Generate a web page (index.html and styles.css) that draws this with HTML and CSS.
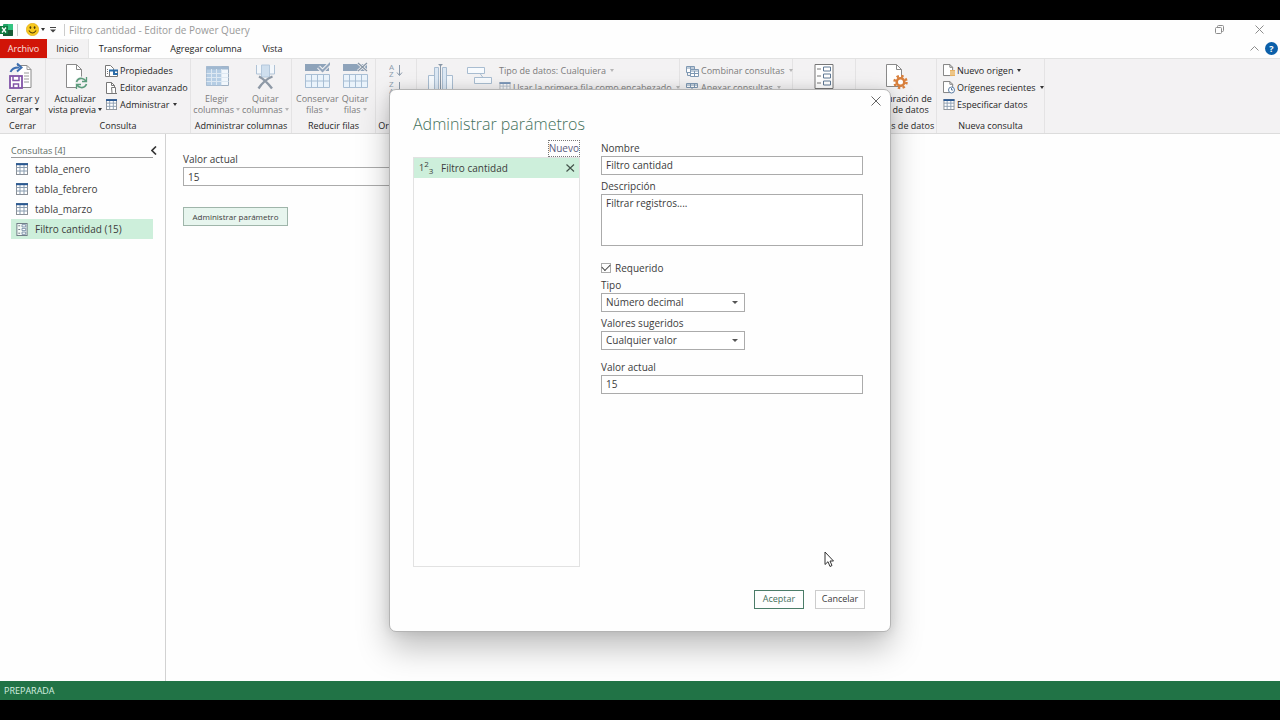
FILE: index.html
```html
<!DOCTYPE html>
<html lang="es">
<head>
<meta charset="UTF-8" />
<meta name="viewport" content="width=device-width, initial-scale=1" />
<title>Filtro cantidad - Editor de Power Query</title>
<link rel="stylesheet" href="styles.css">
</head>
<body>
<!-- shared icons -->
<svg class="defs" aria-hidden="true">
  <symbol id="i-table" viewBox="0 0 12 12">
    <rect x=".5" y=".5" width="11" height="11" fill="#fff" stroke="#8a8f96"/>
    <path d="M.5 4.500h11M.5 8h11M4 2v9.500M8 2v9.500" stroke="#8a9db0" fill="none"/>
    <path d="M0 1.200h12" stroke="#2b5a94" stroke-width="2"/>
  </symbol>
  <symbol id="i-param" viewBox="0 0 12 14">
    <rect x=".5" y=".5" width="11" height="13" fill="#f4fbf7" stroke="#6b7680"/>
    <path d="M2 3h2M2 7h2M2 11h2" stroke="#6b7680"/>
    <path d="M6 1.800h4v2.400H6zM6 5.800h4v2.400H6zM6 9.800h4v2.400H6z" fill="#fff" stroke="#5d7896" stroke-width=".8"/>
  </symbol>
  <symbol id="i-page" viewBox="0 0 12 14">
    <path d="M.5.5h7l3 3v9H.5z" fill="#fff" stroke="#777"/>
    <path d="M7.500.5v3h3" fill="none" stroke="#777"/>
  </symbol>
</svg>

<div class="app">
  <header class="titlebar">
    <svg class="xl" width="13" height="12" viewBox="0 0 13 12" aria-label="Excel">
      <rect x="3" width="10" height="12" rx="1" fill="#21a366"/>
      <path d="M8 0h4q1 0 1 1v5H8z" fill="#33c481"/>
      <path d="M3 6h10v5q0 1-1 1H3z" fill="#185c37"/>
      <rect y="2" width="8" height="8" fill="#107c41"/>
      <path d="M2 3.500l4 5M6 3.500l-4 5" stroke="#fff" stroke-width="1.300"/>
    </svg>
    <span class="bar"></span>
    <svg class="smile" width="13" height="13" viewBox="0 0 13 13">
      <circle cx="6.500" cy="6.500" r="6.200" fill="#f7c81e" stroke="#dfa614" stroke-width=".6"/>
      <ellipse cx="4.400" cy="4.600" rx=".9" ry="1.300" fill="#4d3a08"/>
      <ellipse cx="8.600" cy="4.600" rx=".9" ry="1.300" fill="#4d3a08"/>
      <path d="M2.800 7.500q3.700 5 7.400 0" fill="none" stroke="#4d3a08" stroke-width="1.100"/>
    </svg>
    <i class="caret"></i>
    <svg class="custom" width="6" height="6" viewBox="0 0 6 6"><path d="M0 .5h6" stroke="#444"/><path d="M0 2.500h6L3 5.500z" fill="#444"/></svg>
    <span class="bar"></span>
    <h1>Filtro cantidad - Editor de Power Query</h1>
    <div class="window-btns">
      <button aria-label="Restaurar"><svg width="9" height="9" viewBox="0 0 9 9" fill="none" stroke="#8c8c8c"><rect x=".5" y="2.500" width="6" height="6" rx="1"/><path d="M2.500 2V1.500q0-1 1-1h4q1 0 1 1v4q0 1-1 1H7"/></svg></button>
      <button aria-label="Cerrar ventana"><svg width="9" height="9" viewBox="0 0 9 9" stroke="#8c8c8c"><path d="M.5.5l8 8M8.500.5l-8 8"/></svg></button>
    </div>
  </header>

  <nav class="tabs">
    <button class="tab file">Archivo</button>
    <button class="tab active">Inicio</button>
    <button class="tab transform">Transformar</button>
    <button class="tab add">Agregar columna</button>
    <button class="tab view">Vista</button>
    <div class="help">
      <svg width="9" height="5" viewBox="0 0 9 5" fill="none" stroke="#8c8c8c"><path d="M.5 4.500l4-4 4 4"/></svg>
      <button class="help-btn" aria-label="Ayuda">?</button>
    </div>
  </nav>

  <section class="ribbon">
    <div class="group g-close">
      <div class="tools">
        <button class="big">
          <svg width="26" height="28" viewBox="0 0 26 28" fill="none">
            <path d="M8 3.500h10l4 4v18H13" fill="#fff" stroke="#8a8a8a"/>
            <path d="M18 3.500v4h4M15 11h5M15 14h5M15 17h5M15 20h5" stroke="#9a9a9a"/>
            <path d="M1.500 10q2-5 9-4.500" stroke="#3b6eb0" stroke-width="2"/>
            <path d="M8 1.500l4.500 4L8 9.500" stroke="#3b6eb0" stroke-width="2"/>
            <rect x="1" y="14" width="12" height="12" fill="#fff" stroke="#8254a8" stroke-width="1.800"/>
            <path d="M4 14v4.500h6V14M4.500 26v-4h5v4" stroke="#8254a8" stroke-width="1.500"/>
          </svg>
          <span>Cerrar y<br>cargar<i class="caret"></i></span>
        </button>
      </div>
      <h2>Cerrar</h2>
    </div>

    <div class="group g-query">
      <div class="tools">
        <button class="big">
          <svg width="26" height="28" viewBox="0 0 26 28" fill="none">
            <path d="M4.500 2.500h10l5 5v18h-15z" fill="#fff" stroke="#8a8a8a"/>
            <path d="M14.500 2.500v5h5" stroke="#8a8a8a"/>
            <circle cx="19.500" cy="21" r="6.500" fill="#f3f2f3"/>
            <path d="M14.500 20q1.500-4 5.500-3.500 2.500.3 4 2.500M24.500 22q-1.500 4-5.500 3.500-2.500-.3-4-2.500" stroke="#5b9c7c" stroke-width="1.700"/>
            <path d="M24.500 15v4.500H20M14.500 27v-4.500H19" stroke="#5b9c7c" stroke-width="1.300"/>
          </svg>
          <span>Actualizar<br>vista previa<i class="caret"></i></span>
        </button>
        <div class="stack">
          <button class="small"><svg width="13" height="12" viewBox="0 0 13 12"><path d="M.5.500h5l3 3v8h-8z" fill="#fff" stroke="#777"/><path d="M2 4.500h1M2 6.500h1M2 8.500h1" stroke="#777"/><path d="M4.500 5.500h8v6h-8z" fill="#fff" stroke="#777"/><path d="M4 5.500h9M9 6v3h4" stroke="#2b6ca8" stroke-width="2" fill="none"/></svg>Propiedades</button>
          <button class="small"><svg width="13" height="12" viewBox="0 0 13 12"><path d="M1.500.500h5l3 3v8h-8z" fill="#fff" stroke="#777"/><path d="M6.500.5v3h3" fill="none" stroke="#777"/><path d="M6.500 5.500h4v5q0 1 1.500 1H6q1 0 1-1z" fill="#fff" stroke="#777"/></svg>Editor avanzado</button>
          <button class="small"><svg width="13" height="11"><use href="#i-table"/></svg>Administrar<i class="caret"></i></button>
        </div>
      </div>
      <h2>Consulta</h2>
    </div>

    <div class="group g-cols">
      <div class="tools off">
        <button class="big">
          <svg width="26" height="28" viewBox="0 0 26 28" fill="none">
            <path d="M2.500 4.500h22v19h-22z" fill="#f2f7fc" stroke="#9fb0c2"/>
            <path d="M2.500 4.500h15v19h-15z" fill="#b5cde4"/>
            <path d="M2.500 4.500h22v3h-22z" fill="#a0b8d0"/>
            <path d="M2.500 11.500h22M2.500 15.500h22M2.500 19.500h22M7.500 7v16M12.500 7v16M17.500 7v16" stroke="#dde8f2"/>
          </svg>
          <span>Elegir<br>columnas<i class="caret"></i></span>
        </button>
        <button class="big">
          <svg width="26" height="28" viewBox="0 0 26 28" fill="none">
            <path d="M4.500 3v9h5V3M17.500 3v9h5V3" stroke="#b0c3d6" fill="#f3f7fb"/>
            <path d="M9.500 3h8v12h-8z" fill="#cfdfee" stroke="#b4c8dc"/>
            <path d="M7 14.500q6 3 13 12M20.500 14.500q-8 3-14 12" stroke="#8e99a6" stroke-width="2.400"/>
          </svg>
          <span>Quitar<br>columnas<i class="caret"></i></span>
        </button>
      </div>
      <h2>Administrar columnas</h2>
    </div>

    <div class="group g-rows">
      <div class="tools off">
        <button class="big">
          <svg width="26" height="28" viewBox="0 0 26 28" fill="none">
            <path d="M1 2h24v7H1z" fill="#8ea3ba"/>
            <path d="M1.500 12.500h24v13h-24zM1.500 19h24M7.500 12v13M13.500 12v13M19.500 12v13" fill="#eaf3fb" stroke="#a8bed4"/>
            <path d="M14.500 5l4 4 8-8" stroke="#f3f2f3" stroke-width="4"/><path d="M14.500 5l4 4 8-8" stroke="#93a6bd" stroke-width="2"/>
          </svg>
          <span>Conservar<br>filas<i class="caret"></i></span>
        </button>
        <button class="big">
          <svg width="26" height="28" viewBox="0 0 26 28" fill="none">
            <path d="M1 2h24v7H1z" fill="#8ea3ba"/>
            <path d="M1.500 12.500h24v13h-24zM1.500 19h24M7.500 12v13M13.500 12v13M19.500 12v13" fill="#eaf3fb" stroke="#a8bed4"/>
            <path d="M16 1l9 8M25 1l-9 8" stroke="#f3f2f3" stroke-width="3"/><path d="M16 1l9 8M25 1l-9 8" stroke="#8796a6" stroke-width="1.300"/>
          </svg>
          <span>Quitar<br>filas<i class="caret"></i></span>
        </button>
      </div>
      <h2>Reducir filas</h2>
    </div>

    <div class="group g-sort">
      <div class="tools off">
        <div class="stack">
          <button class="small" aria-label="Orden ascendente"><svg width="14" height="15" viewBox="0 0 14 15"><text x="0" y="7">A</text><text x="0" y="14">Z</text><path d="M10.500 2v10M8 9.500l2.500 3 2.500-3" fill="none" stroke="#8c9bac"/></svg></button>
          <button class="small" aria-label="Orden descendente"><svg width="14" height="15" viewBox="0 0 14 15"><text x="0" y="7">Z</text><text x="0" y="14">A</text><path d="M10.500 2v10M8 9.500l2.500 3 2.500-3" fill="none" stroke="#8c9bac"/></svg></button>
        </div>
      </div>
      <h2>Ordenar</h2>
    </div>

    <div class="group g-transform">
      <div class="tools off">
        <button class="big split" aria-label="Dividir columna">
          <svg width="26" height="28" viewBox="0 0 26 28" fill="none" stroke="#a9bdd1">
            <path d="M.5 13.500h6v14h-6zM18.500 13.500h6v14h-6z" fill="#f5f9fd"/>
            <path d="M6.500 5.500h4v22h-4zM14.500 5.500h4v22h-4z" fill="#dce8f4"/>
            <path d="M12.500 4v24" stroke="#8796a6"/><path d="M10 2h5l-2.500 2.500z" fill="#8796a6" stroke="none"/>
          </svg>
        </button>
        <button class="big" aria-label="Agrupar por">
          <svg width="26" height="28" viewBox="0 0 26 28" fill="#f8fbfe" stroke="#a9bdd1">
            <path d="M.5 5.500h17v6H.500zM7.500 15.500h17v6h-17zM13 11.500l3 4" />
          </svg>
        </button>
        <div class="stack">
          <button class="small">Tipo de datos: Cualquiera<i class="caret"></i></button>
          <button class="small"><svg width="12" height="11"><use href="#i-table"/></svg>Usar la primera fila como encabezado<i class="caret"></i></button>
        </div>
      </div>
    </div>

    <div class="group g-combine">
      <div class="tools off">
        <div class="stack">
          <button class="small"><svg width="13" height="12" viewBox="0 0 13 12" fill="#fff" stroke="#7f98b3"><path d="M.5 1.500h8v6h-8zM.5 3h8M4.500 1v6"/><path d="M4.500 4.500h8v7h-8zM4.500 6h8M4.500 8.500h8M8.500 6v5.500"/><path d="M1.500 8v2.500h3" fill="none"/></svg>Combinar consultas<i class="caret"></i></button>
          <button class="small"><svg width="13" height="12" viewBox="0 0 13 12" fill="#fff" stroke="#7f98b3"><path d="M.5 1.500h11v4H.500zM.5 3h11M4.500 1v4M8.500 1v4M6 6v3M3.500 8.500h5v3h-5z"/></svg>Anexar consultas<i class="caret"></i></button>
        </div>
      </div>
    </div>

    <div class="group g-params">
      <div class="tools">
        <button class="big" aria-label="Administrar parámetros">
          <svg width="20" height="28" viewBox="0 0 20 28" fill="#fff" stroke="#777">
            <path d="M1 2.500h18v24H1z"/>
            <path d="M9.500 5h7v4h-7zM9.500 12h7v4h-7zM9.500 19h7v4h-7z" stroke="#5f7894"/><path d="M3 7h4M3 14h4M3 21h4"/>
          </svg>
        </button>
      </div>
    </div>

    <div class="group g-sources">
      <div class="tools">
        <button class="big">
          <svg width="26" height="28" viewBox="0 0 26 28" fill="none">
            <path d="M3.500 2.500h10l5 5v17h-15z" fill="#fff" stroke="#8a8a8a"/>
            <path d="M13.500 2.500v5h5" stroke="#8a8a8a"/>
            <circle cx="17.500" cy="20" r="6" stroke="#d9803d" stroke-width="2.500" stroke-dasharray="2.400 2.312"/>
            <circle cx="17.500" cy="20" r="3.800" fill="#fff" stroke="#d9803d" stroke-width="2.600"/>
          </svg>
          <span>Configuración de<br>origen de datos</span>
        </button>
      </div>
      <h2>Orígenes de datos</h2>
    </div>

    <div class="group g-new">
      <div class="tools">
        <div class="stack">
          <button class="small"><svg width="12" height="13" viewBox="0 0 12 13"><use href="#i-page" width="11" height="13"/><path d="M7 6h5v6H7z" fill="#e5b062"/><path d="M7 8h5M7 10h5" stroke="#f6dcae"/></svg>Nuevo origen<i class="caret"></i></button>
          <button class="small"><svg width="12" height="13" viewBox="0 0 12 13"><use href="#i-page" width="11" height="13"/><circle cx="8.500" cy="9" r="3" fill="#fff" stroke="#5d7fa6"/><path d="M8.500 7v2h1.500" stroke="#5d7fa6" fill="none"/></svg>Orígenes recientes<i class="caret"></i></button>
          <button class="small"><svg width="12" height="11"><use href="#i-table"/></svg>Especificar datos</button>
        </div>
      </div>
      <h2>Nueva consulta</h2>
    </div>
  </section>

  <main class="workspace">
    <aside class="queries">
      <div class="queries-head">
        <h2>Consultas [4]</h2>
        <button aria-label="Contraer"><svg width="6" height="9" viewBox="0 0 6 9" fill="none" stroke="#333" stroke-width="1.600"><path d="M5 .5l-4 4 4 4"/></svg></button>
      </div>
      <ul>
        <li><svg width="12" height="12"><use href="#i-table"/></svg>tabla_enero</li>
        <li><svg width="12" height="12"><use href="#i-table"/></svg>tabla_febrero</li>
        <li><svg width="12" height="12"><use href="#i-table"/></svg>tabla_marzo</li>
        <li class="selected"><svg width="12" height="13"><use href="#i-param"/></svg>Filtro cantidad (15)</li>
      </ul>
    </aside>
    <section class="preview">
      <label for="current">Valor actual</label>
      <input id="current" type="text" value="15">
      <button class="manage">Administrar parámetro</button>
    </section>
  </main>

  <footer class="status">PREPARADA</footer>
</div>

<div class="overlay">
  <dialog open class="params" aria-labelledby="params-title">
    <button class="close" aria-label="Cerrar"><svg width="10" height="10" viewBox="0 0 10 10" stroke="#666"><path d="M.5.5l9 9M9.500.5l-9 9"/></svg></button>
    <h2 id="params-title">Administrar parámetros</h2>
    <div class="columns">
      <div class="list-col">
        <a class="new" href="#">Nuevo</a>
        <div class="list">
          <div class="item">
            <span class="num">1<sup>2</sup><sub>3</sub></span>
            <span>Filtro cantidad</span>
            <button aria-label="Eliminar"><svg width="9" height="8" viewBox="0 0 9 8" stroke="#45544c" stroke-width="1.200"><path d="M.5.5l7.500 7M8 .5l-7.500 7"/></svg></button>
          </div>
        </div>
      </div>
      <form class="fields">
        <label for="name">Nombre</label>
        <input id="name" type="text" value="Filtro cantidad">
        <label for="desc">Descripción</label>
        <textarea id="desc">Filtrar registros....</textarea>
        <label class="check"><input type="checkbox" checked>Requerido</label>
        <label for="type">Tipo</label>
        <div class="select"><select id="type"><option>Número decimal</option></select></div>
        <label for="suggested">Valores sugeridos</label>
        <div class="select"><select id="suggested"><option>Cualquier valor</option></select></div>
        <label for="value" class="last">Valor actual</label>
        <input id="value" type="text" value="15">
      </form>
    </div>
    <div class="actions">
      <button class="ok">Aceptar</button>
      <button>Cancelar</button>
    </div>
    <svg class="pointer" width="10" height="17" viewBox="0 0 10 17"><path d="M1 1v12.500l3-2.800 2 4.800 2-1-2-4.500h3.500z" fill="#fff" stroke="#333"/></svg>
  </dialog>
</div>
</body>
</html>
```
FILE: styles.css
```css
* {
  margin: 0;
  padding: 0;
  box-sizing: border-box;
}

body {
  background: #000;
  color: #3c3c3c;
  font-family: "Open Sans", "Noto Sans", sans-serif;
  font-size: 10px;
  line-height: 16px;
}

button, input, select, textarea {
  font: inherit;
  color: inherit;
}

button {
  background: none;
  border: 0;
}

h1, h2 {
  font-size: inherit;
  font-weight: normal;
}

svg {
  flex: none;
}

.defs {
  position: absolute;
  width: 0;
  height: 0;
}

.app {
  height: 100vh;
  border: solid #000;
  border-width: 20px 0;
  background: #fefefe;
  display: flex;
  flex-direction: column;
  overflow: hidden;
}

.caret {
  display: inline-block;
  border: 2px solid transparent;
  border-top: 3px solid #333;
  border-bottom: 0;
  margin-left: 2px;
  vertical-align: 2px;
}

/* title bar */
.titlebar {
  height: 19px;
  flex: none;
  display: flex;
  align-items: center;
}

.titlebar .bar {
  width: 1px;
  height: 12px;
  background: #ccc;
  margin: 0 4px;
}

.titlebar .smile {
  margin-left: 4px;
}

.titlebar .custom {
  margin: 0 4px 0 5px;
}

.titlebar h1 {
  color: #999;
}

.window-btns {
  margin-left: auto;
  display: flex;
}

.window-btns button {
  width: 40px;
  display: grid;
  place-items: center;
}

.window-btns button:last-child {
  margin-right: 1px;
}

/* tabs */
.tabs {
  height: 19px;
  flex: none;
  display: flex;
  font-size: 9px;
}

.tab {
  color: #222;
}

.tab.file {
  width: 47px;
  background: #d11507;
  color: #fbe3e0;
}

.tab.active {
  width: 42px;
  background: #f3f2f3;
  border-right: 1px solid #e4e4e4;
}

.tab.transform {
  width: 72px;
}

.tab.add {
  width: 90px;
}

.tab.view {
  width: 43px;
}

.help {
  margin-left: auto;
  display: flex;
  align-items: center;
  gap: 6px;
  padding-right: 2px;
}

.help-btn {
  width: 13px;
  height: 13px;
  border-radius: 50%;
  background: #0b5fa9;
  color: #fff;
  font-weight: bold;
  line-height: 13px;
}

/* ribbon */
.ribbon {
  flex: none;
  height: 76px;
  background: #f3f2f3;
  border-top: 1px solid #e2e2e2;
  border-bottom: 1px solid #dcdcdc;
  display: flex;
  font-size: 9px;
  line-height: 11px;
  white-space: nowrap;
  color: #262626;
}

.group {
  flex: none;
  border-right: 1px solid #e4e3e4;
  display: flex;
  flex-direction: column;
  justify-content: space-between;
  padding-bottom: 2px;
}

.group h2 {
  text-align: center;
}

.tools {
  display: flex;
  justify-content: center;
  padding-top: 3px;
}

.tools.off {
  color: #7c7c7c;
}

.off .caret {
  border-top-color: #b5b5b5;
}

.off .small use {
  opacity: 0.6;
}

.off svg text {
  font-size: 8px;
  fill: #8c9bac;
}

.big {
  display: flex;
  flex-direction: column;
  align-items: center;
  gap: 3px;
}

.small {
  height: 17px;
  display: flex;
  align-items: center;
  gap: 2px;
}

.g-close { width: 46px; }
.g-query { width: 145px; }
.g-cols { width: 101px; }
.g-rows { width: 84px; }
.g-sort { width: 41px; }
.g-transform { width: 263px; }
.g-combine { width: 113px; }
.g-params { width: 63px; }
.g-sources { width: 81px; }
.g-new { width: 108px; }

.g-query .tools {
  gap: 3px;
}

.g-cols .tools {
  gap: 2px;
}

.g-rows .tools {
  justify-content: flex-start;
  gap: 3px;
  padding-left: 4px;
}

.g-transform .tools {
  justify-content: flex-start;
  gap: 6px;
  padding-left: 11px;
}

.split {
  padding-right: 7px;
}

.g-combine .tools,
.g-new .tools {
  justify-content: flex-start;
  padding-left: 6px;
}

/* workspace */
.workspace {
  flex: 1;
  display: flex;
}

.queries {
  width: 166px;
  border-right: 1px solid #d2d2d2;
  padding: 9px 12px 0 11px;
}

.queries-head {
  height: 15px;
  border-bottom: 1px solid #9a9a9a;
  display: flex;
  justify-content: space-between;
  color: #5c6b63;
}

.queries-head h2 {
  font-size: 9px;
}

.queries-head button {
  height: 12px;
  margin-right: -4px;
}

.queries ul {
  list-style: none;
  padding-top: 1px;
}

.queries li {
  height: 20px;
  display: flex;
  align-items: center;
  gap: 7px;
  padding-left: 5px;
}

.queries li.selected {
  background: #cdefdb;
}

.preview {
  flex: 1;
  padding: 17px;
  display: flex;
  flex-direction: column;
  align-items: flex-start;
}

input[type="text"], textarea, select {
  width: 100%;
  height: 19px;
  background: #fff;
  border: 1px solid #ababab;
  padding: 0 4px;
  display: block;
}

.preview input {
  max-width: 400px;
}

.manage {
  margin-top: 21px;
  height: 19px;
  width: 105px;
  border: 1px solid #9fb5aa;
  background: #e7f5ee;
  font-size: 8px;
}

.status {
  flex: none;
  height: 19px;
  background: #217346;
  color: #d6f0e0;
  font-size: 9px;
  line-height: 19px;
  padding-left: 4px;
}

/* dialog */
.overlay {
  position: absolute;
  inset: 0;
  display: grid;
  place-items: center;
}

.params {
  position: relative;
  width: 502px;
  max-width: 100%;
  color: inherit;
  background: #fefefe;
  border: 1px solid #b4b4b4;
  border-radius: 7px;
  box-shadow: 0 16px 32px rgba(0, 0, 0, 0.25), 0 0 12px rgba(0, 0, 0, 0.1);
  padding: 22px 27px 22px 23px;
}

.params h2 {
  font-size: 16px;
  font-weight: 300;
  line-height: 24px;
  color: #44705b;
}

.close {
  position: absolute;
  top: 6px;
  right: 9px;
  height: 10px;
  display: flex;
}

.columns {
  display: flex;
  gap: 21px;
  padding-top: 4px;
}

.list-col {
  width: 167px;
  display: flex;
  flex-direction: column;
  align-items: flex-end;
}

.new {
  border: 1px dotted #777;
  color: #5a5a7c;
  text-decoration: none;
  line-height: 15px;
}

.list {
  width: 100%;
  height: 410px;
  border: 1px solid #e2e2e2;
}

.item {
  height: 20px;
  background: #cdefdb;
  display: flex;
  align-items: center;
  padding: 0 4px 0 5px;
}

.item button {
  margin-left: auto;
  height: 8px;
  display: flex;
}

.num {
  width: 22px;
  font-size: 9px;
  line-height: 9px;
}

.num sup, .num sub {
  font-size: 8px;
  line-height: 0;
}

.fields {
  flex: 1;
}

.fields label {
  display: block;
}

.fields input + label,
.select + label {
  margin-top: 3px;
}

.fields textarea {
  height: 52px;
  resize: none;
}

.fields .check {
  display: flex;
  align-items: center;
  gap: 4px;
  margin: 14px 0 1px;
}

.check input {
  appearance: none;
  width: 10px;
  height: 10px;
  border: 1px solid #ababab;
  display: grid;
  place-items: center;
}

.check input:checked::after {
  content: "";
  width: 7px;
  height: 4px;
  border: solid #444;
  border-width: 0 0 1px 1px;
  transform: translateY(-1px) rotate(-45deg);
}

.select {
  position: relative;
  width: 144px;
}

.select select {
  appearance: none;
}

.select::after {
  content: "";
  position: absolute;
  right: 7px;
  top: 8px;
  border: 3px solid transparent;
  border-top-color: #555;
  border-bottom: 0;
}

.select + .last {
  margin-top: 9px;
}

.actions {
  display: flex;
  justify-content: flex-end;
  gap: 11px;
  margin: 23px -2px 0 0;
}

.actions button {
  width: 50px;
  height: 19px;
  border: 1px solid #ccc;
  font-size: 9px;
}

.actions .ok {
  border-color: #4b7c68;
  color: #44705b;
}

.pointer {
  position: absolute;
  right: 56px;
  bottom: 63px;
}
```
